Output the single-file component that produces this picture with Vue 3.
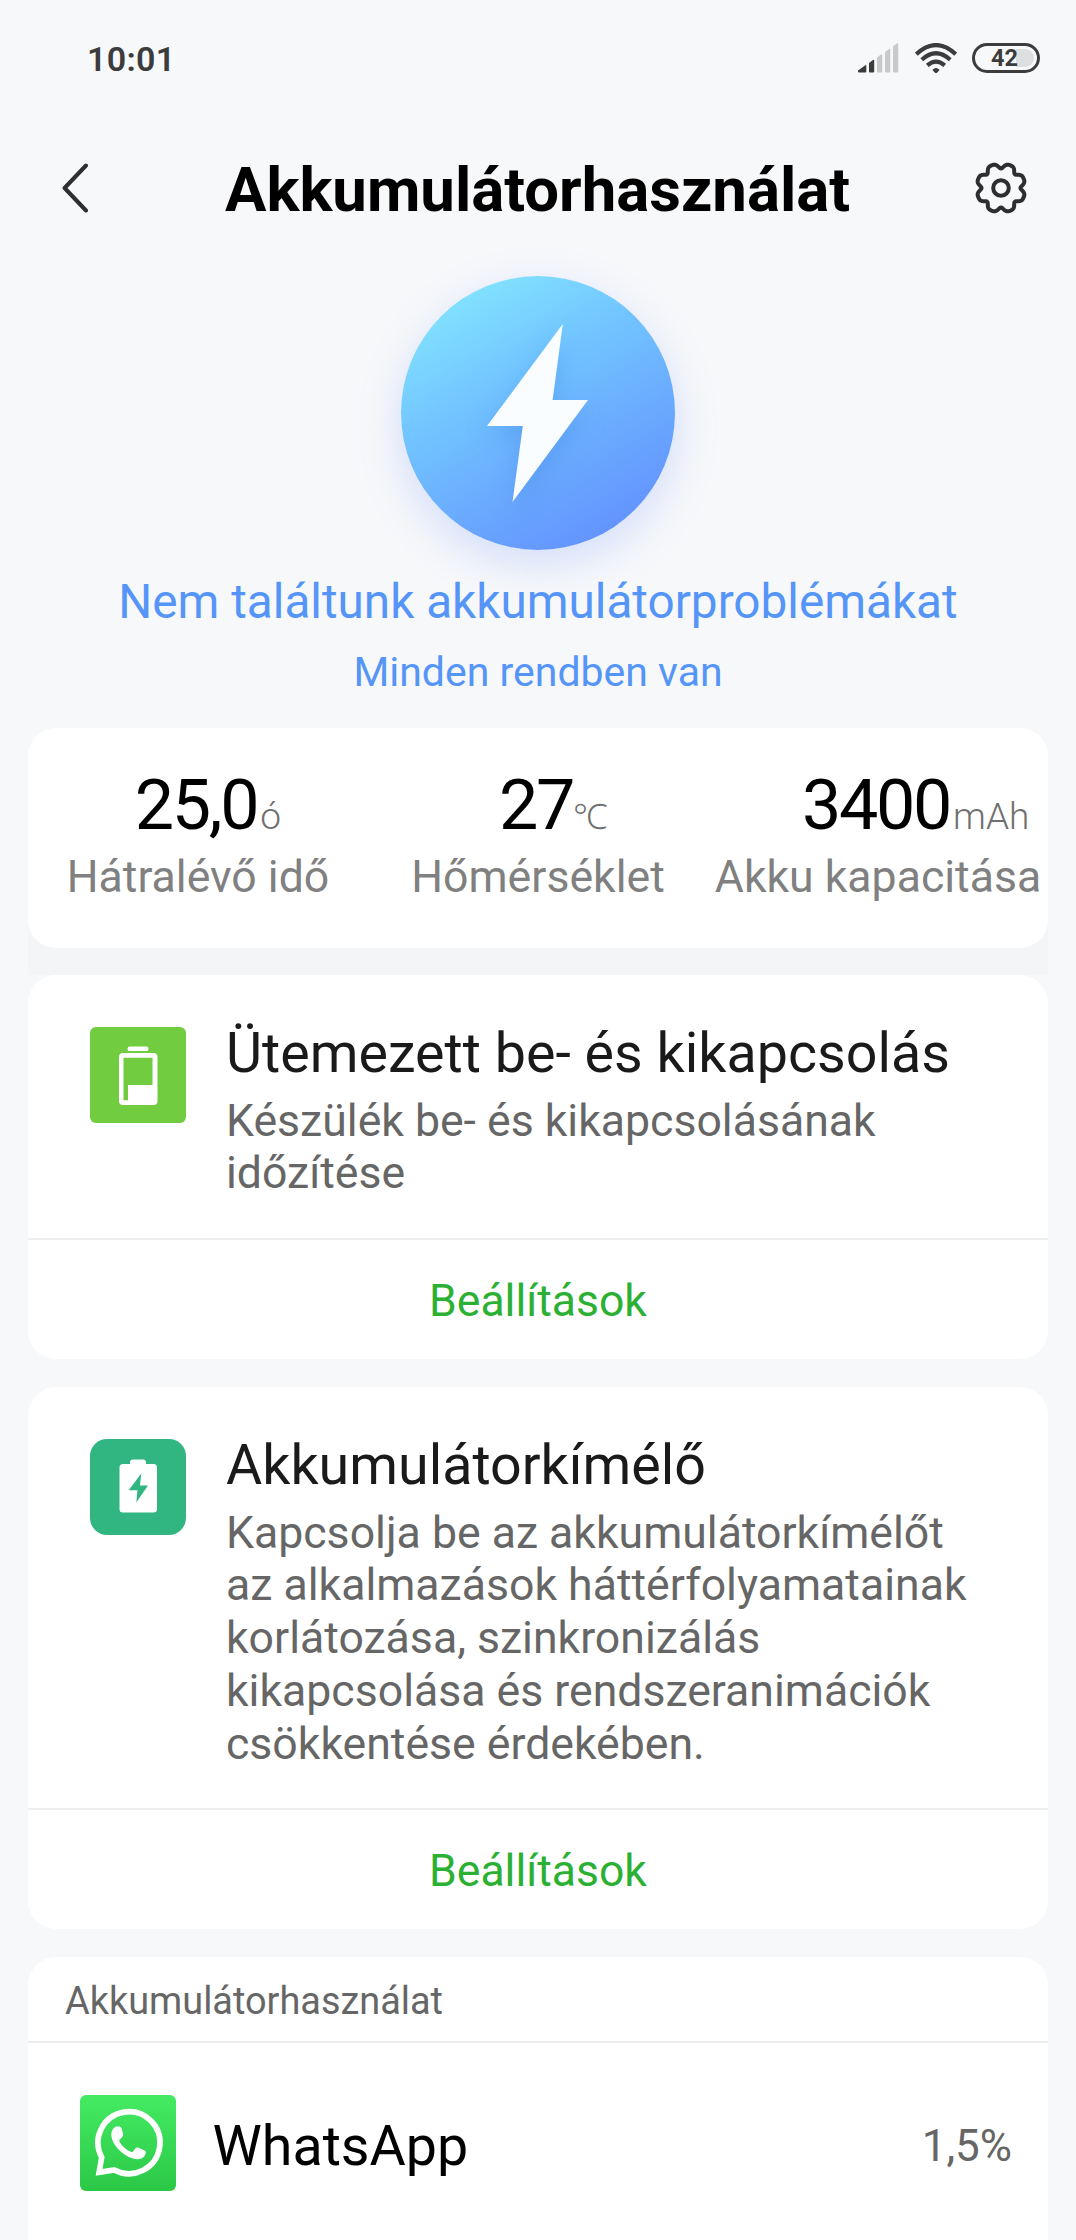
<script setup>
const stats = [
  { value: '25,0', unit: 'ó', label: 'Hátralévő idő' },
  { value: '27', unit: '℃', label: 'Hőmérséklet', tight: true },
  { value: '3400', unit: 'mAh', label: 'Akku kapacitása' },
]

// Outline of the settings gear: broad rounded lobes with narrow notches between.
const lobes = 8
const gearPoints = []
for (let i = 0; i < 240; i++) {
  const a = (i / 240) * Math.PI * 2
  const notch = Math.pow((1 + Math.cos(lobes * a)) / 2, 2)
  const r = 24.5 - 5 * notch
  gearPoints.push(`${(26 + r * Math.sin(a)).toFixed(2)},${(26 - r * Math.cos(a)).toFixed(2)}`)
}
const gear = gearPoints.join(' ')
</script>

<template>
  <div class="screen">
    <div class="status">
      <span class="clock">10:01</span>
      <div class="status-icons">
        <svg class="signal" width="41" height="30" viewBox="0 0 41 30">
          <g fill="#3c3c3c">
            <path d="M0 27.5L7 22.4Q8.3 21.6 8.3 23V28.5Q8.3 29.5 7.3 29.5H1Q0 29.5 0 28.5Z" />
            <path d="M11 20L15 17Q16.2 16.2 16.2 17.6V28.5Q16.2 29.5 15.2 29.5H12Q11 29.5 11 28.5Z" />
          </g>
          <g fill="#c9c9ca">
            <path d="M19 14.6L23 11.6Q24.2 10.8 24.2 12.2V28.5Q24.2 29.5 23.2 29.5H20Q19 29.5 19 28.5Z" />
            <path d="M27 8.9L31 5.9Q32.2 5.1 32.2 6.5V28.5Q32.2 29.5 31.2 29.5H28Q27 29.5 27 28.5Z" />
            <path d="M35 3.2L39 .5Q40.2 -.1 40.2 1.2V28.5Q40.2 29.5 39.2 29.5H36Q35 29.5 35 28.5Z" />
          </g>
        </svg>
        <svg class="wifi" width="42" height="31" viewBox="0 0 42 31">
          <g fill="none" stroke="#3c3c3c" stroke-width="4.2">
            <path d="M1.3 11.2Q21 -7 40.7 11.2" />
            <path d="M6.8 16.8Q21 3.8 35.2 16.8" />
            <path d="M12.3 22.4Q21 14.8 29.7 22.4" />
          </g>
          <path d="M17.4 27Q21 23.2 24.6 27L22 29.8Q21 30.6 20 29.8Z" fill="#3c3c3c" />
        </svg>
        <div class="battery"><span>42</span><i class="charge"></i></div>
      </div>
    </div>

    <header class="header">
      <svg class="back" width="28" height="50" viewBox="0 0 28 50">
        <path d="M24 2.5L2.6 25L24 47.5" fill="none" stroke="#2d2f2f" stroke-width="4" stroke-linecap="round" stroke-linejoin="round" />
      </svg>
      <h1>Akkumulátorhasználat</h1>
      <svg class="gear" width="52" height="52" viewBox="0 0 52 52">
        <g fill="none" stroke="#2d2f2f" stroke-width="4" stroke-linejoin="round">
          <polygon :points="gear" />
          <circle cx="26" cy="26" r="7.8" />
        </g>
      </svg>
    </header>

    <section class="hero">
      <div class="orb">
        <svg width="274" height="274" viewBox="0 0 274 274">
          <path d="M161.8 48L151.6 124H187L111.5 226L121.8 150H86Z" fill="#fafdff" />
        </svg>
      </div>
      <p class="headline">Nem találtunk akkumulátorproblémákat</p>
      <p class="subline">Minden rendben van</p>
    </section>

    <main class="content">
      <div class="stats-wrap">
        <section class="card stats">
          <div v-for="s in stats" :key="s.label" class="stat">
            <div class="figure">
              <span class="value">{{ s.value }}</span>
              <span class="unit" :class="{ tight: s.tight }">{{ s.unit }}</span>
            </div>
            <div class="label">{{ s.label }}</div>
          </div>
        </section>
      </div>

      <section class="card">
        <div class="body short">
          <svg class="icon" width="96" height="96" viewBox="0 0 96 96">
            <rect width="96" height="96" rx="6" fill="#72cc3f" />
            <rect x="37.5" y="19.5" width="21" height="4.6" rx="2.2" fill="#fff" />
            <rect x="29" y="26" width="38.5" height="52" rx="4" fill="#fff" />
            <path d="M34 30.8H62.5V58H38V73.2H34Q33.5 73.2 33.5 72.5V31.3Q33.5 30.8 34 30.8Z" fill="#72cc3f" />
          </svg>
          <div class="text">
            <h2>Ütemezett be- és kikapcsolás</h2>
            <p>Készülék be- és kikapcsolásának időzítése</p>
          </div>
        </div>
        <div class="action">Beállítások</div>
      </section>

      <section class="card">
        <div class="body tall">
          <svg class="icon" width="96" height="96" viewBox="0 0 96 96">
            <rect width="96" height="96" rx="17" fill="#31b581" />
            <path d="M43 20.5H53Q56 20.5 56 23.5V25H63.5Q67 25 67 28.5V70Q67 73.5 63.5 73.5H33Q29.5 73.5 29.5 70V28.5Q29.5 25 33 25H40V23.5Q40 20.5 43 20.5Z" fill="#fff" />
            <path d="M51.2 34.5L50 46.5H58L46.3 63.5L47.5 51.3H38.7Z" fill="#31b581" />
          </svg>
          <div class="text">
            <h2>Akkumulátorkímélő</h2>
            <p>Kapcsolja be az akkumulátorkímélőt az alkalmazások háttérfolyamatainak korlátozása, szinkronizálás kikapcsolása és rendszeranimációk csökkentése érdekében.</p>
          </div>
        </div>
        <div class="action">Beállítások</div>
      </section>

      <section class="card usage">
        <div class="usage-title">Akkumulátorhasználat</div>
        <div class="app-row">
          <svg width="96" height="96" viewBox="0 0 96 96">
            <defs>
              <linearGradient id="chat" x1="0" y1="0" x2="0" y2="1">
                <stop offset="0" stop-color="#44eb62" />
                <stop offset="1" stop-color="#2bc846" />
              </linearGradient>
            </defs>
            <rect width="96" height="96" rx="6" fill="url(#chat)" />
            <path d="M18.8 77.3L21.4 62.4A31 31 0 1 1 34 75Z" transform="translate(.3 0)" fill="none" stroke="#fff" stroke-width="5.6" />
            <path d="M36 31.6H39.5Q41.3 31.8 41.8 34L43.2 39.6Q43.4 41.2 41.8 42.6L39.6 44.8Q39 45.6 39.6 46.8C42.4 51.6 46.4 55.4 51.2 57Q52.2 57.3 53 56.4L55.6 53.2Q56.6 52 58 52.6L64.6 55.6Q66 56.2 65.8 57.8C65.3 61.4 62 64.3 57.6 64.3C45.6 63.8 31.3 50.5 31.3 39.6C31.3 35.4 33.2 32.8 36 31.6Z" fill="#fff" />
          </svg>
          <span class="app-name">WhatsApp</span>
          <span class="percent">1,5%</span>
        </div>
      </section>
    </main>
  </div>
</template>

<style>
body {
  background: #f7f8fa;
}
</style>

<style scoped>
.screen {
  width: 1076px;
  height: 2240px;
  overflow: hidden;
  background: #f7f8fa;
  font-family: Roboto, "Noto Sans", sans-serif;
  color: #000;
}

h1, h2, p {
  margin: 0;
  font-weight: 400;
}

svg {
  display: block;
  flex: none;
}

.status {
  display: flex;
  justify-content: space-between;
  align-items: center;
  height: 116px;
  padding: 0 36px 0 87px;
}

.clock {
  padding-top: 2px;
  font-size: 34px;
  font-weight: 600;
  letter-spacing: 0.3px;
  color: #3c3c3c;
}

.status-icons {
  display: flex;
  align-items: center;
}

.signal {
  margin-right: 16px;
}

.wifi {
  margin-right: 15px;
}

.battery {
  position: relative;
  display: flex;
  align-items: center;
  justify-content: center;
  box-sizing: border-box;
  width: 68px;
  height: 30px;
  border: 3px solid #3c3c3c;
  border-radius: 15px;
  font-size: 23.5px;
  font-weight: 700;
  color: #3c3c3c;
}

.battery span {
  position: relative;
  z-index: 1;
  padding-right: 3px;
  line-height: 24px;
}

.charge {
  position: absolute;
  top: 3px;
  right: 3px;
  width: 18px;
  height: 18px;
  border-radius: 0 9px 9px 0;
  background: #dcdee0;
}

.header {
  display: flex;
  align-items: center;
  height: 144px;
  padding: 0 49.5px 0 62px;
}

h1 {
  flex: 1;
  padding: 4px 0 0 135px;
  font-size: 61.7px;
  font-weight: 700;
  line-height: 76px;
}

.hero {
  display: flex;
  flex-direction: column;
  align-items: center;
  height: 452px;
  padding-top: 16px;
  color: #5595f8;
}

.orb {
  width: 274px;
  height: 274px;
  flex: none;
  border-radius: 50%;
  background: linear-gradient(150deg, #84e6ff 8%, #72c5ff 38%, #6aaafe 64%, #628fff 92%);
  box-shadow: 0 14px 44px rgba(95, 140, 255, 0.24);
}

.orb svg {
  filter: drop-shadow(0 10px 12px rgba(50, 120, 220, 0.28));
}

.headline {
  margin-top: 20px;
  font-size: 47.7px;
  line-height: 64px;
  white-space: nowrap;
}

.subline {
  margin-top: 10px;
  font-size: 41px;
  line-height: 56px;
}

.content {
  margin: 0 28px;
}

.card {
  margin-bottom: 28px;
  overflow: hidden;
  border-radius: 28px;
  background: #fff;
}

/* The strip below the figures is a shade darker than the page. */
.stats-wrap {
  height: 247px;
  background: linear-gradient(#f7f8fa 110px, #f4f5f7 110px);
}

.stats {
  display: flex;
  box-sizing: border-box;
  height: 220px;
  padding-top: 37px;
}

.stat {
  flex: 1 1 0;
  min-width: 0;
}

.figure {
  display: grid;
  grid-template-columns: 1fr auto 1fr;
  align-items: baseline;
  height: 80px;
  margin: 0 1px 0 -3px;
}

.value {
  grid-column: 2;
  font-size: 70px;
  font-weight: 450;
  line-height: 80px;
  letter-spacing: -2.3px;
}

.unit {
  padding-left: 3px;
  font-size: 37px;
  font-weight: 300;
  color: #707070;
}

.unit.tight {
  padding-left: 0;
  font-size: 35px;
}

.label {
  margin: 4px -10px 0;
  font-size: 44.6px;
  line-height: 56px;
  text-align: center;
  white-space: nowrap;
  color: #808080;
}

.body {
  display: flex;
  box-sizing: border-box;
  padding: 45px 0 0 61.5px;
}

.short {
  height: 263px;
}

.tall {
  height: 421px;
}

.icon {
  margin: 7px 40.5px 0 0;
}

.text {
  width: 752px;
}

h2 {
  font-size: 55.6px;
  line-height: 66px;
  white-space: nowrap;
  color: #1a1a1a;
}

.text p {
  margin-top: 8.5px;
  font-size: 44.6px;
  line-height: 52.8px;
  color: #666;
}

.action {
  box-sizing: border-box;
  height: 121px;
  padding-top: 2px;
  border-top: 2px solid #eee;
  font-size: 44.5px;
  line-height: 119px;
  text-align: center;
  color: #2bb033;
}

.usage {
  margin-bottom: 0;
  border-radius: 28px 28px 0 0;
}

.usage-title {
  height: 80px;
  padding: 4px 0 0 37px;
  border-bottom: 2px solid #ececec;
  font-size: 37.9px;
  line-height: 80px;
  color: #666;
}

.app-row {
  display: flex;
  align-items: flex-start;
  box-sizing: border-box;
  height: 200px;
  padding: 52px 36px 0 51.5px;
  line-height: 96px;
}

.app-name {
  flex: 1;
  padding: 3px 0 0 37px;
  font-size: 55.6px;
}

.percent {
  padding-top: 3px;
  font-size: 44px;
  color: #666;
}
</style>
